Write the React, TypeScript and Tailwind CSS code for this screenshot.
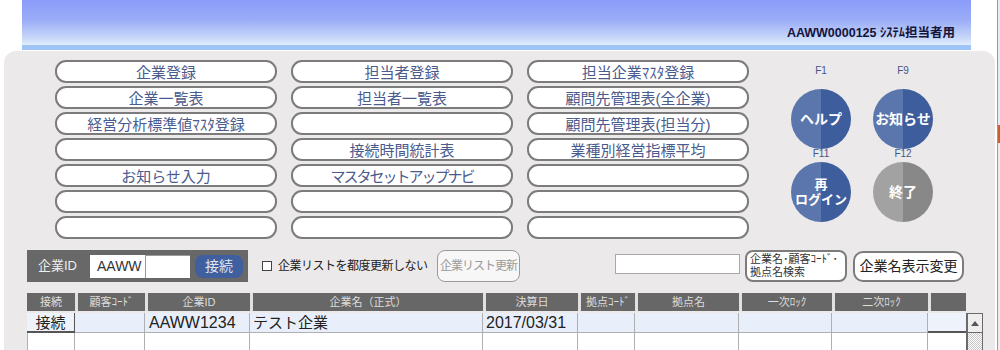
import React from "react";

const menu: string[][] = [
  ["企業登録", "担当者登録", "担当企業ﾏｽﾀ登録"],
  ["企業一覧表", "担当者一覧表", "顧問先管理表(全企業)"],
  ["経営分析標準値ﾏｽﾀ登録", "", "顧問先管理表(担当分)"],
  ["", "接続時間統計表", "業種別経営指標平均"],
  ["お知らせ入力", "マスタセットアップナビ", ""],
  ["", "", ""],
  ["", "", ""],
];

const headers = [
  "接続",
  "顧客ｺｰﾄﾞ",
  "企業ID",
  "企業名（正式）",
  "決算日",
  "拠点ｺｰﾄﾞ",
  "拠点名",
  "一次ﾛｯｸ",
  "二次ﾛｯｸ",
  "",
];

const gridCols =
  "grid grid-cols-[48px_70px_105px_233px_95px_57px_104px_93px_96px_38px_17px]";

function MenuButton({ label }: { label: string }) {
  return (
    <button
      className={
        "h-[23px] w-[222px] rounded-[11px] border-2 border-[#7c7c7c] bg-white pt-[1px] text-[15px] leading-none text-[#4a5b8e] " +
        (label === "マスタセットアップナビ" ? "tracking-[-2px]" : "")
      }
    >
      {label}
    </button>
  );
}

function RoundButton({ label, gray }: { label: React.ReactNode; gray?: boolean }) {
  return (
    <div
      className={
        "flex h-[60px] w-[60px] shrink-0 items-center justify-center rounded-full text-center text-[14px] font-bold leading-[15px] text-white " +
        (gray
          ? "bg-[linear-gradient(to_right,#a2a2a2_50%,#888888_50%)]"
          : "bg-[linear-gradient(to_right,#5a76ad_50%,#3d5d9d_50%)]")
      }
    >
      {label}
    </div>
  );
}

function FKey({ k }: { k: string }) {
  return <div className="h-[10px] text-center text-[10px] leading-[10px] text-[#44558a]">{k}</div>;
}

export default function App() {
  return (
    <div className="flex h-[350px] w-[1000px] overflow-hidden bg-white font-['Liberation_Sans','Noto_Sans_CJK_JP',sans-serif]">
      <div className="w-[997px] shrink-0">
        {/* title bar */}
        <div className="ml-[22px] flex h-[50px] w-[949px] items-start justify-end bg-[linear-gradient(to_bottom,#8a9cf8_0%,#9aacf7_40%,#c6d6f9_75%,#e0ecfc_89%,#9ec3f5_90%,#9ec3f5_100%)] pr-[16px] pt-[26px]">
          <span className="text-[12.5px] font-bold leading-[14px] text-[#14143c]">AAWW0000125 ｼｽﾃﾑ担当者用</span>
        </div>

        {/* main panel */}
        <div className="ml-[4px] mt-[1px] h-[299px] w-[991px] rounded-t-[12px] bg-[#ece9ea] px-[23px] pt-[9px]">
          <div className="flex">
            <div className="ml-[28px] grid grid-cols-[222px_222px_222px] gap-x-[14px] gap-y-[3px]">
              {menu.flatMap((row, r) =>
                row.map((label, c) => <MenuButton key={`${r}-${c}`} label={label} />)
              )}
            </div>

            <div className="ml-[42px] grid grid-cols-[60px_60px] gap-x-[22px]">
              <div>
                <div className="mt-[6px]">
                  <FKey k="F1" />
                </div>
                <div className="mt-[13px]">
                  <RoundButton label="ヘルプ" />
                </div>
                <FKey k="F11" />
                <div className="mt-[3px]">
                  <RoundButton
                    label={
                      <span className="text-[13px]">
                        再<br />
                        ログイン
                      </span>
                    }
                  />
                </div>
              </div>
              <div>
                <div className="mt-[6px]">
                  <FKey k="F9" />
                </div>
                <div className="mt-[13px]">
                  <RoundButton label="お知らせ" />
                </div>
                <FKey k="F12" />
                <div className="mt-[3px]">
                  <RoundButton label="終了" gray />
                </div>
              </div>
            </div>
          </div>

          {/* controls */}
          <div className="mt-[11px] flex h-[32px] items-center">
            <div className="flex h-[32px] w-[221px] shrink-0 items-center bg-[#686868] pl-[11px]">
              <span className="w-[52px] text-[13px] text-[#eeeeee]">企業ID</span>
              <div className="flex h-[23px] w-[100px] items-center bg-white">
                <span className="w-[55px] pl-[7px] text-[14px] text-[#333]">AAWW</span>
                <div className="h-full w-[45px] border-l border-t border-[#9a9a9a]" />
              </div>
              <button className="ml-[5px] h-[23px] w-[48px] rounded-[8px] bg-[#3f5f9f] text-[14px] leading-none text-[#dde3f0]">
                接続
              </button>
            </div>

            <div className="ml-[14px] flex w-[175px] shrink-0 items-center">
              <div className="h-[10px] w-[10px] border border-[#444] bg-white" />
              <span className="ml-[6px] text-[12px] tracking-[-0.5px] text-[#222]">企業リストを都度更新しない</span>
            </div>

            <button className="h-[32px] w-[83px] shrink-0 rounded-[8px] border border-[#9a9a9a] bg-[#f7f7f7] text-[12px] leading-none tracking-[-1px] text-[#9a9a9a]">
              企業リスト更新
            </button>

            <div className="ml-[95px] mt-[4px] h-[20px] w-[125px] shrink-0 self-start border border-[#a8a8a8] bg-white" />

            <button className="ml-[5px] h-[32px] w-[102px] shrink-0 rounded-[8px] border-2 border-[#7c7c7c] bg-white pl-[3px] text-left text-[11px] leading-[13px] text-[#333]">
              企業名･顧客ｺｰﾄﾞ･
              <br />
              拠点名検索
            </button>

            <button className="ml-[6px] h-[31px] w-[111px] shrink-0 rounded-[10px] border-2 border-[#7c7c7c] bg-white text-[14px] leading-none text-[#222]">
              企業名表示変更
            </button>
          </div>

          {/* table */}
          <div className="mt-[11px]">
            <div className={gridCols + " h-[18px]"}>
              {headers.map((h, i) => (
                <div
                  key={i}
                  className={
                    "flex items-center justify-center bg-[#676767] text-[11px] leading-none text-[#dddddd] " +
                    (i > 0 ? "border-l-[3px] border-[#e2e0e0]" : "")
                  }
                >
                  {h}
                </div>
              ))}
              <div />
            </div>

            <div className={gridCols + " mt-[2px] h-[20px] text-[16px] leading-none text-[#222]"}>
              <div className="flex items-center justify-center border-b-2 border-r border-[#555] bg-[#eef3fb] text-[15px]">
                接続
              </div>
              <div className="border-b border-r border-[#b0b0b0] bg-[#e8effa]" />
              <div className="flex items-center border-b border-r border-[#b0b0b0] bg-[#e8effa] pl-[4px]">AAWW1234</div>
              <div className="flex items-center border-b border-r border-[#b0b0b0] bg-[#e8effa] pl-[3px] text-[15px]">
                テスト企業
              </div>
              <div className="flex items-center border-b border-r border-[#b0b0b0] bg-[#e8effa] pl-[3px]">2017/03/31</div>
              <div className="border-b border-r border-[#b0b0b0] bg-[#e8effa]" />
              <div className="border-b border-r border-[#b0b0b0] bg-[#e8effa]" />
              <div className="border-b border-r border-[#b0b0b0] bg-[#e8effa]" />
              <div className="border-b border-r border-[#b0b0b0] bg-[#e8effa]" />
              <div className="border-b-2 border-[#555] bg-[#eef3fb]" />
              <div className="flex items-center justify-center border-y border-l-2 border-r border-[#6a6a6a] bg-[#eeeeee]">
                <svg width="8" height="5" viewBox="0 0 8 5">
                  <path d="M0 5 L4 0 L8 5 Z" fill="#555" />
                </svg>
              </div>
            </div>

            <div className={gridCols + " h-[20px]"}>
              <div className="border-l border-r border-[#b0b0b0] bg-white" />
              <div className="border-r border-[#b0b0b0] bg-white" />
              <div className="border-r border-[#b0b0b0] bg-white" />
              <div className="border-r border-[#b0b0b0] bg-white" />
              <div className="border-r border-[#b0b0b0] bg-white" />
              <div className="border-r border-[#b0b0b0] bg-white" />
              <div className="border-r border-[#b0b0b0] bg-white" />
              <div className="border-r border-[#b0b0b0] bg-white" />
              <div className="border-r border-[#b0b0b0] bg-white" />
              <div className="bg-white" />
              <div className="border-l-2 border-r border-[#6a6a6a] bg-[repeating-conic-gradient(#c4c4c4_0%_25%,#ffffff_0%_50%)] bg-[length:2px_2px]" />
            </div>
          </div>
        </div>
      </div>

      {/* edge of neighbouring window */}
      <div className="flex w-[3px] flex-col border-l border-[#9a9a9a]">
        <div className="h-[125px] bg-[#e6ecf4]" />
        <div className="h-[18px] bg-[#c3622e]" />
        <div className="flex-1 bg-[#eeeeee]" />
      </div>
    </div>
  );
}
